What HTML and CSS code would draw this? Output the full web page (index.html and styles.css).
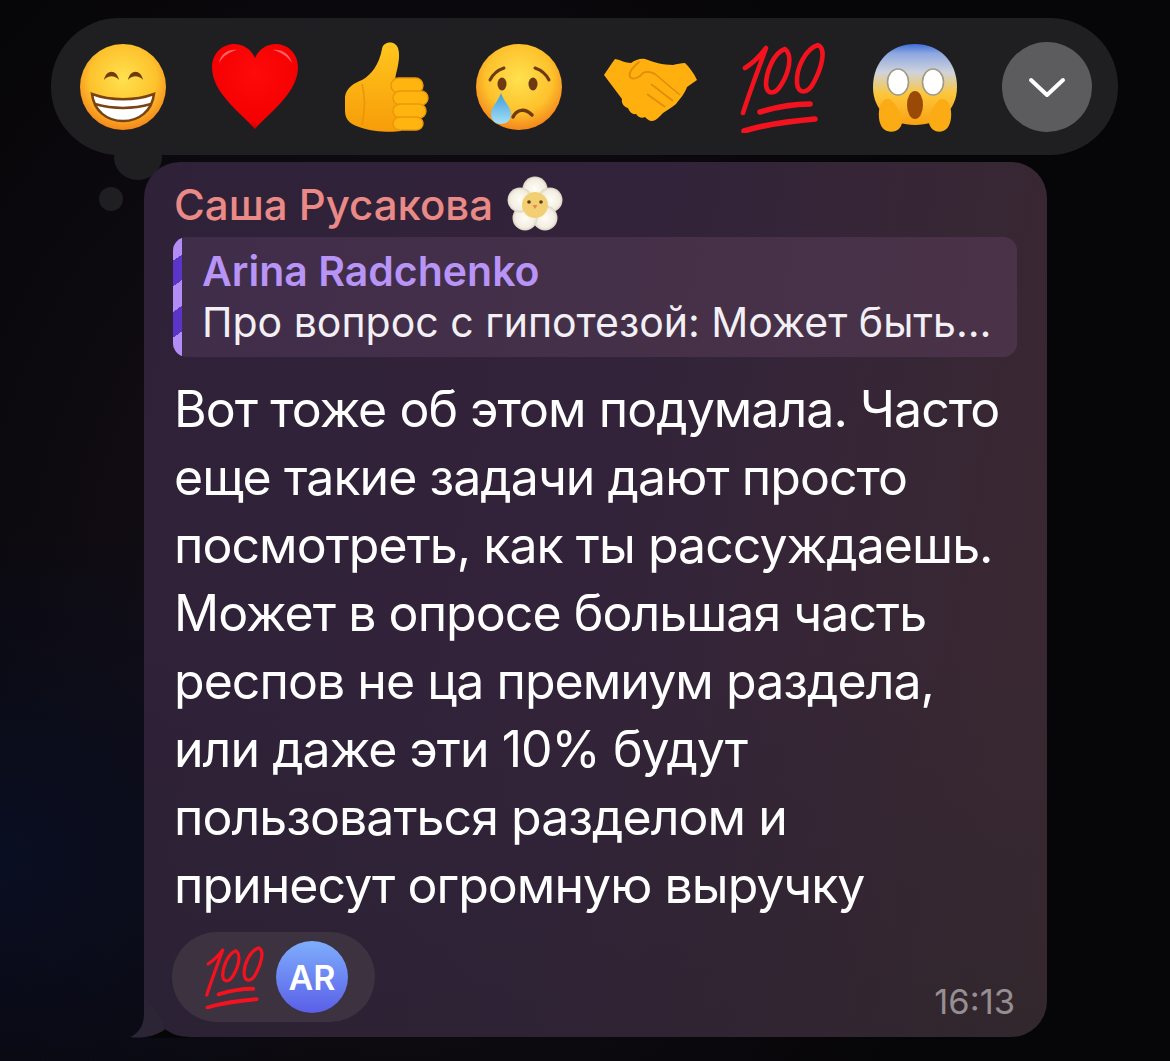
FILE: index.html
```html
<!DOCTYPE html>
<html lang="ru">
<head>
    <meta charset="UTF-8">
    <meta name="viewport" content="width=device-width, initial-scale=1.0">
    <title>Сообщение</title>
    <link rel="stylesheet" href="styles.css">
</head>
<body>
    <svg class="defs" width="0" height="0" aria-hidden="true">
        <defs>
            <radialGradient id="face" cx="50%" cy="40%" r="60%">
                <stop offset="0" stop-color="#ffe14f"/>
                <stop offset=".65" stop-color="#fdc22c"/>
                <stop offset="1" stop-color="#f4861b"/>
            </radialGradient>
            <radialGradient id="heart" cx="50%" cy="35%" r="70%">
                <stop offset="0" stop-color="#ff0a0a"/>
                <stop offset=".8" stop-color="#f50000"/>
                <stop offset="1" stop-color="#b80000"/>
            </radialGradient>
            <linearGradient id="thumb" x1="0" y1="0" x2="0" y2="1">
                <stop offset="0" stop-color="#ffc61e"/>
                <stop offset="1" stop-color="#f79c08"/>
            </linearGradient>
            <linearGradient id="fear" x1="0" y1="0" x2="0" y2="1">
                <stop offset="0" stop-color="#3f6fd8"/>
                <stop offset=".12" stop-color="#8fa8e0"/>
                <stop offset=".35" stop-color="#cfd3dc"/>
                <stop offset=".62" stop-color="#fdc63a"/>
                <stop offset="1" stop-color="#f9a012"/>
            </linearGradient>
            <linearGradient id="tear" x1="0" y1="0" x2="0" y2="1">
                <stop offset="0" stop-color="#3f9bdc"/>
                <stop offset="1" stop-color="#a5e0f5"/>
            </linearGradient>
            <radialGradient id="petal" cx="50%" cy="50%" r="55%">
                <stop offset="0" stop-color="#fffdf6"/>
                <stop offset=".7" stop-color="#f3eee2"/>
                <stop offset="1" stop-color="#cfc7b4"/>
            </radialGradient>
            <symbol id="hundred" viewBox="0 0 88 92">
                <g fill="none" stroke="#f5121f" stroke-linecap="round" stroke-linejoin="round">
                    <path stroke-width="4.6" d="M6 27 C14 22 21 15 27 7 C21 24 11 50 4 72"/>
                    <path stroke-width="4.6" d="M46 8 C34 12 27 32 27 44 C28 54 36 54 42 44 C50 32 54 14 46 8 Z"/>
                    <path stroke-width="4.6" d="M79 4 C66 8 57 28 58 42 C59 54 69 53 75 41 C82 28 88 8 79 4 Z"/>
                    <path stroke-width="5.6" d="M21 71 C37 66 54 63 71 63"/>
                    <path stroke-width="5.6" d="M5 90 C28 83 52 80 76 78"/>
                </g>
            </symbol>
        </defs>
    </svg>

    <div class="reaction-bar">
        <!-- grin -->
        <svg class="emoji" viewBox="0 0 88 88">
            <circle cx="44" cy="44" r="43" fill="url(#face)"/>
            <path d="M25 37 C27 26 38 26 40 37 C36 32 29 32 25 37 Z" fill="#6d3a12"/>
            <path d="M49 37 C51 26 62 26 64 37 C60 32 53 32 49 37 Z" fill="#6d3a12"/>
            <path d="M13 51 C32 58 56 58 75 51 C73 68 60 78 44 78 C28 78 15 68 13 51 Z" fill="#fff" stroke="#7a4312" stroke-width="2.5"/>
            <path d="M16 61 C34 66 54 66 72 61" fill="none" stroke="#7a4312" stroke-width="2.5"/>
        </svg>
        <!-- heart -->
        <svg class="emoji" viewBox="0 0 88 88">
            <path d="M44 86 C30 70 1 50 1 24 C1 10 12 1 23 1 C32 1 40 6 44 15 C48 6 56 1 65 1 C76 1 87 10 87 24 C87 50 58 70 44 86 Z" fill="url(#heart)"/>
            <path d="M8 20 C10 10 18 6 26 7 C18 9 12 13 8 20 Z M62 7 C70 6 78 10 81 20 C76 13 70 9 62 7 Z" fill="#ff8a8a" opacity=".7"/>
        </svg>
        <!-- thumbs up -->
        <svg class="emoji" viewBox="0 0 88 92">
            <path d="M2 56 C3 47 11 42 19 39 C28 34 36 24 39 8 C40 0 52 -1 55 7 C58 16 54 28 52 38 L58 90 C46 92 28 90 19 87 C9 84 2 80 2 70 Z" fill="url(#thumb)"/>
            <g fill="#ffb40f" stroke="#ec9608" stroke-width="1.4">
                <rect x="48" y="37" width="32" height="15" rx="7.5"/>
                <rect x="50" y="50" width="35" height="14" rx="7"/>
                <rect x="50" y="63" width="33" height="14" rx="7"/>
                <rect x="50" y="76" width="30" height="13" rx="6.5"/>
            </g>
            <path d="M19 43 C22 54 22 70 19 84" stroke="#e8950a" stroke-width="1.5" fill="none"/>
        </svg>
        <!-- crying -->
        <svg class="emoji" viewBox="0 0 88 88">
            <circle cx="44" cy="44" r="43" fill="url(#face)"/>
            <path d="M15 37 C18 31 23 27 29 25" fill="none" stroke="#6d3a12" stroke-width="3" stroke-linecap="round"/>
            <path d="M60 25 C66 27 71 31 74 37" fill="none" stroke="#6d3a12" stroke-width="3" stroke-linecap="round"/>
            <ellipse cx="27" cy="41" rx="4.5" ry="6.5" fill="#6d3a12"/>
            <ellipse cx="58" cy="41" rx="4.5" ry="6.5" fill="#6d3a12"/>
            <path d="M38 74 C42 66 50 65 57 72" fill="none" stroke="#6d3a12" stroke-width="3.5" stroke-linecap="round"/>
            <path d="M26 50 C29 59 36 64 36 71 C36 78 31 81 26 81 C21 81 16 78 16 71 C16 64 23 59 26 50 Z" fill="url(#tear)"/>
        </svg>
        <!-- handshake -->
        <svg class="emoji emoji-wide" viewBox="0 0 96 66">
            <path d="M1 18 C5 12 9 6 12 2 C18 3 22 6 28 6 C32 3 38 1 42 2 C50 5 60 8 70 8 C74 7 78 6 82 6 C86 10 91 16 94 23 L84 30 C82 36 77 42 73 47 C68 51 64 53 60 56 C56 60 53 64 49 64 C46 64 44 62 42 60 C39 62 35 60 33 57 C29 58 26 54 25 51 C21 50 18 46 19 42 C13 34 7 26 1 18 Z" fill="#ffb00f"/>
            <path d="M36 5 C30 10 25 16 27 20 C30 24 37 20 40 16 C44 14 48 15 52 17" fill="none" stroke="#e38c06" stroke-width="1.8" stroke-linecap="round"/>
            <path d="M52 17 L77 38 M48 27 L70 44 M44 37 L62 50" stroke="#e38c06" stroke-width="1.6" fill="none"/>
        </svg>
        <!-- hundred -->
        <svg class="emoji"><use href="#hundred"/></svg>
        <!-- scream -->
        <svg class="emoji" viewBox="0 0 88 92">
            <path d="M2 46 C2 20 20 3 44 3 C68 3 86 20 86 46 C86 70 68 84 44 84 C20 84 2 70 2 46 Z" fill="url(#fear)"/>
            <ellipse cx="27" cy="41" rx="10.5" ry="13" fill="#fff" stroke="#a09a88" stroke-width="1.6"/>
            <ellipse cx="62" cy="41" rx="10.5" ry="13" fill="#fff" stroke="#a09a88" stroke-width="1.6"/>
            <ellipse cx="44" cy="64" rx="8" ry="14" fill="#9a4a06"/>
            <path d="M8 70 C9 60 16 55 21 60 C25 64 31 72 31 82 C29 90 22 92 16 90 C10 88 7 80 8 70 Z" fill="#fbab14"/>
            <path d="M80 70 C79 60 72 55 67 60 C63 64 58 72 58 82 C60 90 67 92 72 90 C78 88 81 80 80 70 Z" fill="#fbab14"/>
        </svg>
        <button class="expand-btn" type="button">
            <svg width="38" height="22" viewBox="0 0 38 22"><path d="M3 3 L19 18 L35 3" fill="none" stroke="#fff" stroke-width="4" stroke-linecap="round" stroke-linejoin="round"/></svg>
        </button>
    </div>
    <div class="bar-tail"></div>
    <div class="bar-dot"></div>

    <div class="bubble">
        <div class="sender">
            <span>Саша Русакова</span>
            <svg class="flower" viewBox="0 0 56 56">
                <g fill="url(#petal)">
                    <circle cx="28" cy="13" r="12.5"/>
                    <circle cx="43" cy="24" r="12.5"/>
                    <circle cx="38" cy="42" r="12.5"/>
                    <circle cx="18" cy="42" r="12.5"/>
                    <circle cx="13" cy="24" r="12.5"/>
                </g>
                <circle cx="28" cy="29" r="13" fill="#f2cf72"/>
                <circle cx="22" cy="26" r="1.8" fill="#5b3d1c"/>
                <circle cx="34" cy="26" r="1.8" fill="#5b3d1c"/>
                <path d="M25.5 29 L30.5 29 L28 33 Z" fill="#e8894a"/>
            </svg>
        </div>
        <div class="reply">
            <div class="reply-name">Arina Radchenko</div>
            <div class="reply-text">Про вопрос с гипотезой: Может быть…</div>
        </div>
        <div class="message">Вот тоже об этом подумала. Часто<br>еще такие задачи дают просто<br>посмотреть, как ты рассуждаешь.<br>Может в опросе большая часть<br>респов не ца премиум раздела,<br>или даже эти 10% будут<br>пользоваться разделом и<br>принесут огромную выручку</div>
        <div class="footer">
            <div class="reaction-pill">
                <svg class="pill-icon"><use href="#hundred"/></svg>
                <div class="avatar">AR</div>
            </div>
            <div class="time">16:13</div>
        </div>
        <svg class="bubble-tail" width="60" height="42" viewBox="0 0 60 42">
            <path d="M14 0 L14 18 C14 30 8 38 0 41 C12 43 26 40 35 33 L30 20 L18 6 Z" fill="#2c2535"/>
            <path d="M35 33 C31 37 26 40 18 42 L60 42 L60 41 C50 41 41 38 35 33 Z" fill="#060507"/>
        </svg>
    </div>
</body>
</html>
```

FILE: styles.css
```css
* {
    box-sizing: border-box;
}

html, body {
    margin: 0;
    height: 100%;
}

body {
    position: relative;
    height: 1061px;
    padding: 18px 0 0 51px;
    overflow: hidden;
    font-family: Inter, 'Noto Sans', sans-serif;
    background:
        radial-gradient(380px 340px at 0 860px, #0a0e22, rgba(10, 14, 34, 0)),
        radial-gradient(620px 760px at 400px 600px, #18121c, rgba(24, 18, 28, 0)),
        #060507;
    color: #fff;
}

.defs {
    position: absolute;
}

.reaction-bar {
    display: flex;
    align-items: center;
    gap: 44px;
    width: 1067px;
    height: 137px;
    padding-left: 28px;
    border-radius: 68px;
    background-color: #1f1f21;
}

.emoji {
    flex: none;
    width: 88px;
    height: 92px;
    overflow: visible;
}

.emoji-wide {
    width: 96px;
    height: 66px;
    margin: 6px -4px 0;
}

.expand-btn {
    flex: none;
    display: flex;
    align-items: center;
    justify-content: center;
    width: 90px;
    height: 90px;
    margin-left: -1px;
    padding: 3px 0 0;
    border: none;
    border-radius: 50%;
    background-color: #5c5c5e;
}

.bar-tail {
    position: absolute;
    left: 114px;
    top: 135px;
    width: 48px;
    height: 45px;
    border-radius: 50%;
    background-color: #1f1f21;
}

.bar-dot {
    position: absolute;
    left: 99px;
    top: 187px;
    width: 24px;
    height: 24px;
    border-radius: 50%;
    background-color: #1f1f21;
}

.bubble {
    position: relative;
    width: 903px;
    height: 875px;
    margin: 7px 0 0 93px;
    padding: 15px 30px 0 30px;
    border-radius: 36px;
    background:
        linear-gradient(180deg, rgba(30, 34, 38, 0) 55%, rgba(30, 34, 38, .25) 100%),
        linear-gradient(100deg, #2e2138 0%, #33233a 50%, #3a2930 100%);
}

.sender {
    display: flex;
    align-items: center;
    gap: 14px;
    height: 54px;
    font-size: 42px;
    font-weight: 500;
    color: #ea8a87;
    white-space: nowrap;
}

.flower {
    width: 56px;
    height: 56px;
}

.reply {
    position: relative;
    width: 844px;
    height: 120px;
    margin: 6px 0 0 -1px;
    padding: 8px 0 0 29px;
    border-radius: 14px;
    overflow: hidden;
    background: linear-gradient(100deg, #402d4a, #4a3348);
}

.reply::before {
    content: "";
    position: absolute;
    left: 0;
    top: 0;
    bottom: 0;
    width: 9px;
    background: repeating-linear-gradient(-35deg, #b48cf5 0 21px, #5a35c8 21px 42px);
}

.reply-name {
    height: 52px;
    line-height: 52px;
    font-size: 41px;
    font-weight: 600;
    color: #b794f6;
    white-space: nowrap;
}

.reply-text {
    height: 50px;
    line-height: 50px;
    font-size: 41px;
    color: #f2f0f4;
    white-space: nowrap;
}

.message {
    margin-top: 18px;
    font-size: 50px;
    line-height: 68px;
    letter-spacing: -0.95px;
    white-space: nowrap;
}

.footer {
    display: flex;
    justify-content: space-between;
    align-items: flex-end;
    margin: 13px 0 0 -2px;
}

.reaction-pill {
    display: flex;
    align-items: center;
    gap: 11px;
    width: 203px;
    height: 90px;
    padding-left: 32px;
    border-radius: 45px;
    background-color: #3c3240;
}

.pill-icon {
    width: 61px;
    height: 64px;
}

.avatar {
    display: flex;
    align-items: center;
    justify-content: center;
    width: 72px;
    height: 72px;
    border-radius: 50%;
    background: linear-gradient(180deg, #7eaefc, #5a5fe8);
    font-size: 34px;
    font-weight: 600;
}

.time {
    margin: 0 2px 0 0;
    font-size: 34.5px;
    color: #968f92;
}

.bubble-tail {
    position: absolute;
    left: -14px;
    bottom: -1px;
}
```
